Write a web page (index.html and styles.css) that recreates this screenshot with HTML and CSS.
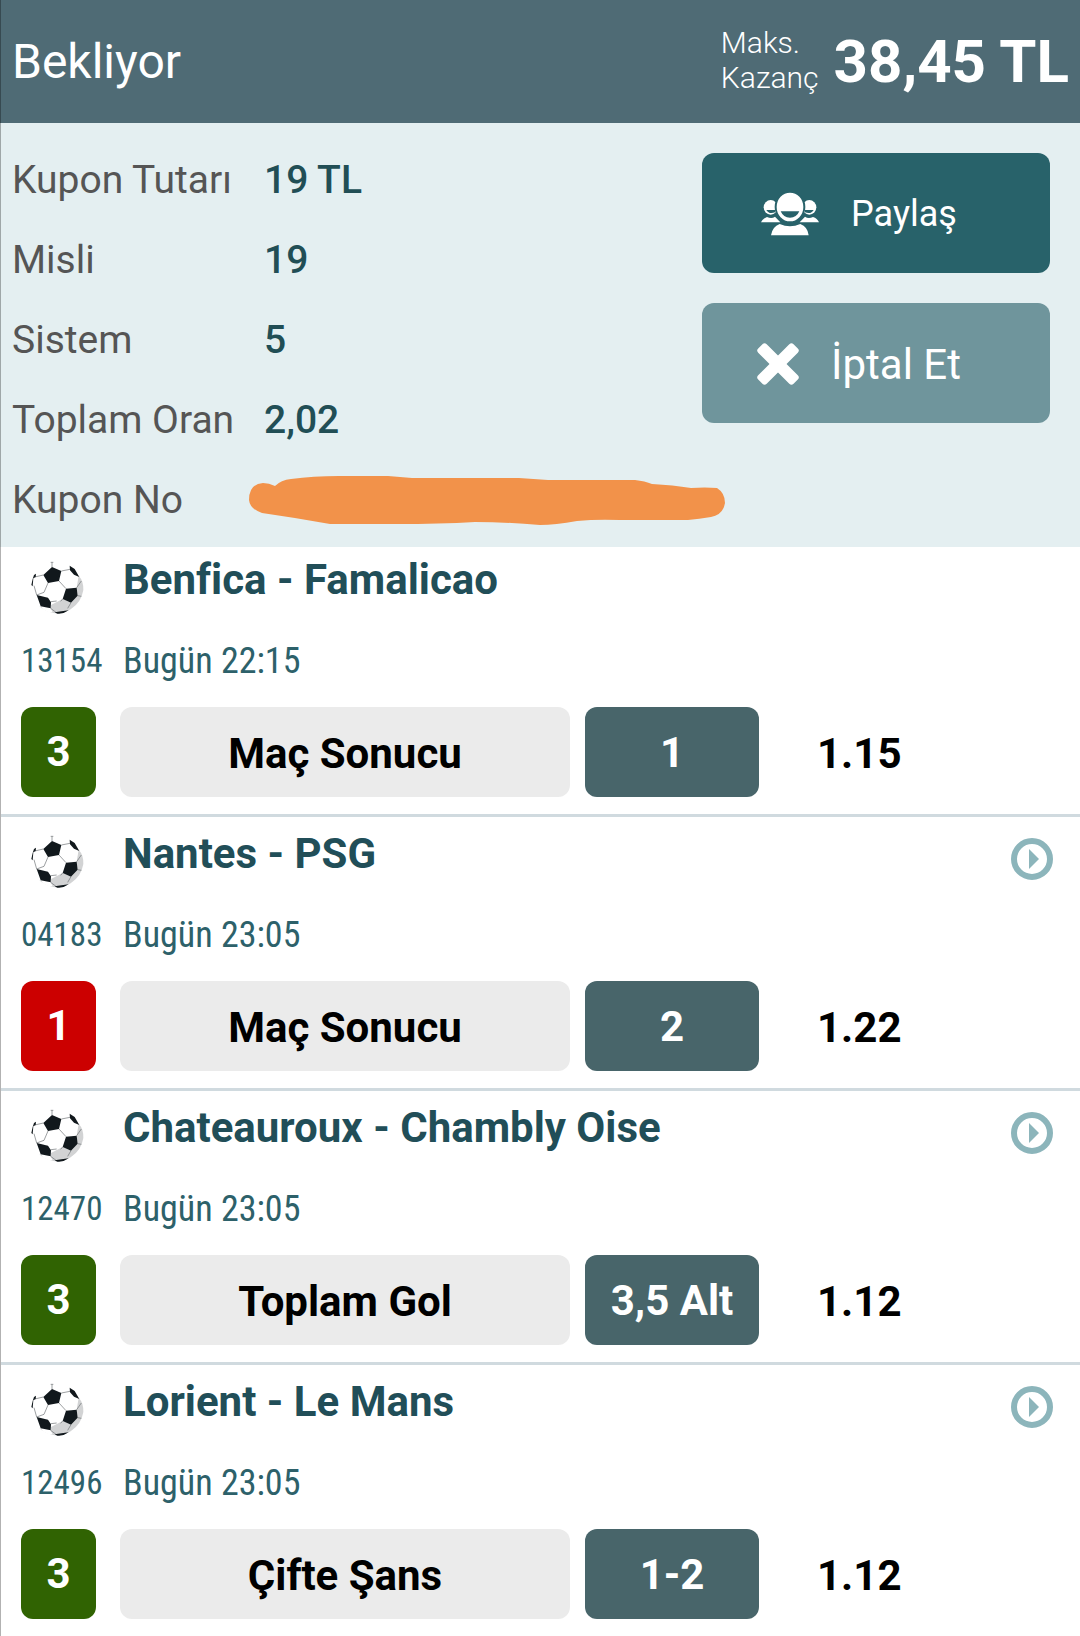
FILE: index.html
```html
<!DOCTYPE html>
<html lang="tr">
<head>
    <meta charset="UTF-8">
    <meta name="viewport" content="width=device-width, initial-scale=1.0">
    <title>Kupon</title>
    <link rel="stylesheet" href="styles.css">
</head>
<body>

<!-- Shared icons -->
<svg class="sprite" aria-hidden="true">
    <symbol id="ball" viewBox="33 18 162 162">
        <path fill="#d2d3d4" d="M176 62Q191 78 190 105Q184 142 152 163Q128 178 100 174Q72 168 58 154L92 160L93 150L128 132L153 143L173 122L170 98Z"/>
        <path fill="#fff" d="M92 160L62 154L70 164Q82 172 98 172Z"/>
        <path fill="none" stroke="#6b6f72" stroke-width="2" d="M96 22V36M92 22H100M124 48L150 43M117 78L138 101M84 84L72 112M70 60L44 66M72 112L50 120M42 92L50 120M93 140L110 138M128 132L122 139M153 143L143 160M170 98L184 78M173 122L184 124M92 160L108 172"/>
        <path fill="#11181c" d="M96 36L124 48L117 78L84 84L70 60ZM138 101L170 98L173 122L153 143L128 132ZM50 120L84 128L93 142L92 160L62 154ZM149 32L164 42L178 66L162 59L150 46ZM48 56L47 66L40 70L38 94L34 90L38 72L42 60ZM104 172Q124 169 146 166Q130 178 112 176Z"/>
    </symbol>
    <symbol id="play" viewBox="0 0 42 42">
        <circle cx="21" cy="21" r="18" fill="none" stroke="currentColor" stroke-width="6"/>
        <path fill="currentColor" d="M18 11L28 21L18 31Z"/>
    </symbol>
</svg>

<header class="coupon-header">
    <h1>Bekliyor</h1>
    <div class="max-win">
        <span class="max-win-label">Maks.<br>Kazanç</span>
        <strong>38,45 TL</strong>
    </div>
</header>

<section class="summary">
    <dl class="details">
        <dt>Kupon Tutarı</dt>
        <dd>19 TL</dd>
        <dt>Misli</dt>
        <dd>19</dd>
        <dt>Sistem</dt>
        <dd>5</dd>
        <dt>Toplam Oran</dt>
        <dd>2,02</dd>
        <dt>Kupon No</dt>
        <dd>
            <svg class="hidden-number" viewBox="0 0 476 50" role="img" aria-label="Gizli">
                <path fill="#f2924a" d="M0 25Q0 9 14 8Q20 8 26 11Q32 5 42 4Q64 1 90 1H139L163 3H270L299 5H386Q396 6 403 9Q424 10 442 13Q456 12 468 13Q476 18 476 28Q474 40 462 42Q450 44 439 45H371Q348 44 328 46Q306 50 291 50Q258 47 226 47Q190 49 148 49H81Q48 43 13 38Q1 34 0 25Z"/>
            </svg>
        </dd>
    </dl>
    <div class="actions">
        <button type="button" class="share">
            <svg width="58" height="44" viewBox="66 64 174 132" aria-hidden="true">
                <g id="friend">
                    <ellipse cx="95" cy="110" rx="21" ry="22" fill="#fff"/>
                    <path fill="#28626a" d="M82 118H108V125Q90 132 82 118Z"/>
                    <path fill="#fff" d="M66 155Q71 143 84 139Q98 145 108 138L124 155Z"/>
                </g>
                <use href="#friend" transform="matrix(-1 0 0 1 306 0)"/>
                <ellipse cx="153" cy="109" rx="43" ry="46" fill="#fff" stroke="#28626a" stroke-width="6"/>
                <path fill="#28626a" d="M125 122H181Q173 141 153 141Q133 141 125 122Z"/>
                <path fill="#fff" d="M96 194Q100 168 122 160Q153 174 184 160Q206 168 209 194Z"/>
            </svg>
            Paylaş
        </button>
        <button type="button" class="cancel">
            <svg width="42" height="42" viewBox="0 0 42 42" aria-hidden="true">
                <g fill="#fff">
                    <rect x="-4" y="15" width="50" height="12" rx="3" transform="rotate(45 21 21)"/>
                    <rect x="-4" y="15" width="50" height="12" rx="3" transform="rotate(-45 21 21)"/>
                </g>
            </svg>
            İptal Et
        </button>
    </div>
</section>

<main class="matches">
    <article class="match">
        <div class="match-top">
            <svg class="ball"><use href="#ball"/></svg>
            <h2>Benfica - Famalicao</h2>
        </div>
        <div class="match-info">
            <span class="code">13154</span>
            <time>Bugün 22:15</time>
        </div>
        <div class="bet">
            <span class="mbs green">3</span>
            <span class="market">Maç Sonucu</span>
            <span class="pick">1</span>
            <span class="odds">1.15</span>
        </div>
    </article>

    <article class="match">
        <div class="match-top">
            <svg class="ball"><use href="#ball"/></svg>
            <h2>Nantes - PSG</h2>
            <button type="button" class="play" aria-label="Canlı izle"><svg><use href="#play"/></svg></button>
        </div>
        <div class="match-info">
            <span class="code">04183</span>
            <time>Bugün 23:05</time>
        </div>
        <div class="bet">
            <span class="mbs red">1</span>
            <span class="market">Maç Sonucu</span>
            <span class="pick">2</span>
            <span class="odds">1.22</span>
        </div>
    </article>

    <article class="match">
        <div class="match-top">
            <svg class="ball"><use href="#ball"/></svg>
            <h2>Chateauroux - Chambly Oise</h2>
            <button type="button" class="play" aria-label="Canlı izle"><svg><use href="#play"/></svg></button>
        </div>
        <div class="match-info">
            <span class="code">12470</span>
            <time>Bugün 23:05</time>
        </div>
        <div class="bet">
            <span class="mbs green">3</span>
            <span class="market">Toplam Gol</span>
            <span class="pick">3,5 Alt</span>
            <span class="odds">1.12</span>
        </div>
    </article>

    <article class="match">
        <div class="match-top">
            <svg class="ball"><use href="#ball"/></svg>
            <h2>Lorient - Le Mans</h2>
            <button type="button" class="play" aria-label="Canlı izle"><svg><use href="#play"/></svg></button>
        </div>
        <div class="match-info">
            <span class="code">12496</span>
            <time>Bugün 23:05</time>
        </div>
        <div class="bet">
            <span class="mbs green">3</span>
            <span class="market">Çifte Şans</span>
            <span class="pick">1-2</span>
            <span class="odds">1.12</span>
        </div>
    </article>
</main>

</body>
</html>
```
FILE: styles.css
```css
* {
    box-sizing: border-box;
}
body {
    margin: 0;
    font-family: Roboto, sans-serif;
    background-color: #fff;
    color: #000;
}
h1, h2, dl, dd {
    margin: 0;
}
button {
    font-family: inherit;
    border: none;
    padding: 0;
    cursor: pointer;
}
svg {
    display: block;
    flex: none;
}
.sprite {
    display: none;
}

/* thin line down the left edge of every section */
.coupon-header,
.summary,
.matches {
    border-left: 1px solid rgba(0, 0, 0, 0.3);
}

/* Header */
.coupon-header {
    display: flex;
    justify-content: space-between;
    align-items: center;
    height: 123px;
    padding: 0 11px;
    background-color: #4f6b75;
    color: #fff;
}
.coupon-header h1 {
    font-size: 48px;
    font-weight: 400;
}
.max-win {
    display: flex;
    align-items: center;
    gap: 15px;
}
.max-win-label {
    padding-bottom: 4px;
    font-size: 30px;
    font-weight: 300;
    line-height: 35px;
}
.max-win strong {
    font-size: 60px;
    font-weight: 700;
}

/* Summary */
.summary {
    display: flex;
    justify-content: space-between;
    align-items: flex-start;
    padding: 17px 30px 7px 11px;
    background-color: #e4eff1;
}
.details {
    display: grid;
    grid-template-columns: 252px minmax(0, 1fr);
    flex: 1;
    min-width: 0;
    font-size: 39px;
    line-height: 80px;
}
.details dt {
    color: #555;
}
.details dd {
    display: flex;
    align-items: center;
    font-weight: 500;
    color: #214e55;
}
.hidden-number {
    width: 476px;
    height: 50px;
    margin-left: -15px;
}
.actions {
    display: flex;
    flex-direction: column;
    gap: 30px;
    width: 348px;
    padding-top: 13px;
}
.actions button {
    display: flex;
    justify-content: center;
    align-items: center;
    gap: 32px;
    height: 120px;
    padding: 2px 34px 0 0;
    border-radius: 12px;
    color: #fff;
}
.share {
    background-color: #28626a;
    font-size: 36px;
}
.cancel {
    background-color: #6f959c;
    font-size: 42px;
}

/* Matches */
.match {
    padding: 4px 0 17px 20px;
    border-bottom: 3px solid #d0dadf;
}
.match:first-child {
    padding-top: 0;
}
.match:last-child {
    border-bottom: none;
}
.match-top,
.match-info {
    display: grid;
    grid-template-columns: 87px 1fr auto;
    column-gap: 15px;
    align-items: center;
}
.match-top {
    height: 76px;
    padding-right: 27px;
}
.match-top h2 {
    padding-bottom: 12px;
    font-size: 42px;
    font-weight: 700;
    color: #214e58;
}
.ball {
    width: 54px;
    height: 60px;
    padding-top: 6px;
    margin-left: 10px;
}
.play {
    background: none;
    color: #8cb5bb;
}
.play svg {
    width: 42px;
    height: 42px;
}
.match-info {
    height: 74px;
    font-family: "Roboto Condensed", "Liberation Sans Narrow", Roboto, sans-serif;
    color: #2d616a;
}
.code {
    font-size: 33px;
}
.match-info time {
    padding-top: 2px;
    font-size: 36px;
}
.bet {
    display: grid;
    grid-template-columns: 84px 450fr 174fr 306fr;
    column-gap: 15px;
    margin-top: 10px;
    font-size: 42px;
    font-weight: 700;
    line-height: 90px;
}
.mbs,
.market,
.pick {
    border-radius: 12px;
    text-align: center;
}
.mbs {
    width: 75px;
    color: #fff;
}
.green {
    background-color: #306302;
}
.red {
    background-color: #cc0000;
}
.market,
.odds {
    padding-top: 4px;
    line-height: 86px;
}
.market {
    background-color: #ebebeb;
}
.pick {
    padding-top: 2px;
    line-height: 88px;
    background-color: #48656a;
    color: #fff;
}
.odds {
    padding-left: 43px;
}
```
